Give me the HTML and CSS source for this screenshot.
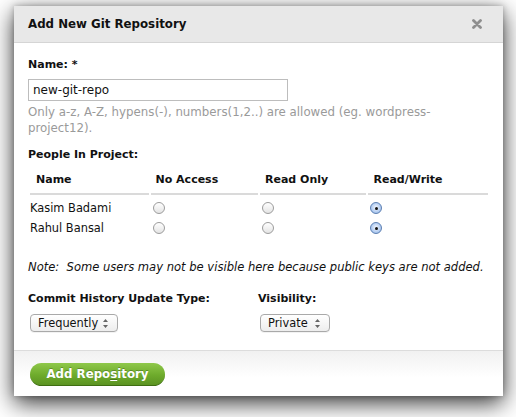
FILE: index.html
```html
<!DOCTYPE html>
<html>
<head>
<meta charset="utf-8">
<link rel="stylesheet" href="styles.css">
</head>
<body>
<div class="page">
  <div class="dialog">
    <div class="header">
      <span class="title">Add New Git Repository</span>
      <svg class="close" width="10" height="10" viewBox="0 0 10 10"><path d="M1.5 1.5 L8.5 8.5 M8.5 1.5 L1.5 8.5" stroke="#8e8e8e" stroke-width="2.8" stroke-linecap="round"/></svg>
    </div>
    <div class="content">
      <div class="label">Name: *</div>
      <div class="input">new-git-repo</div>
      <div class="help">Only a-z, A-Z, hypens(-), numbers(1,2..) are allowed (eg. wordpress-project12).</div>
      <div class="label people">People In Project:</div>
      <table class="perm">
        <colgroup><col class="c1"><col class="c2"><col class="c3"><col class="c4"></colgroup>
        <thead>
          <tr><th class="first">Name</th><th>No Access</th><th>Read Only</th><th>Read/Write</th></tr>
        </thead>
        <tbody>
          <tr><td class="first">Kasim Badami</td><td><span class="radio"></span></td><td><span class="radio"></span></td><td><span class="radio on"></span></td></tr>
          <tr><td class="first">Rahul Bansal</td><td><span class="radio"></span></td><td><span class="radio"></span></td><td><span class="radio on"></span></td></tr>
        </tbody>
      </table>
      <div class="note">Note:&nbsp; Some users may not be visible here because public keys are not added.</div>
      <div class="options">
        <div class="opt opt1">
          <div class="label">Commit History Update Type:</div>
          <div class="select w1"><span>Frequently</span><svg width="5" height="9" viewBox="0 0 5 9"><path d="M2.5 0 L5 3 L0 3 Z M2.5 9 L5 6 L0 6 Z" fill="#666"/></svg></div>
        </div>
        <div class="opt">
          <div class="label">Visibility:</div>
          <div class="select w2"><span>Private</span><svg width="5" height="9" viewBox="0 0 5 9"><path d="M2.5 0 L5 3 L0 3 Z M2.5 9 L5 6 L0 6 Z" fill="#666"/></svg></div>
        </div>
      </div>
    </div>
    <div class="footer">
      <div class="button">Add Repo<u>s</u>itory</div>
    </div>
  </div>
</div>
</body>
</html>
```
FILE: styles.css
```css
html, body {
  margin: 0;
  padding: 0;
  background: #ffffff;
}
body {
  font-family: "DejaVu Sans", "Liberation Sans", sans-serif;
  font-size: 11.5px;
  color: #111;
}
.page {
  padding: 6px 13px 21px 14px;
}
.dialog {
  width: 489px;
  background: #fff;
  box-shadow: 0 7px 22px rgba(0,0,0,0.8), 0 0 6px rgba(0,0,0,0.25);
}
.header {
  height: 36px;
  background: #e8e8e8;
  border-bottom: 1px solid #d5d5d5;
  display: flex;
  align-items: center;
  justify-content: space-between;
  padding: 0 21px 0 14px;
}
.title {
  font-weight: bold;
  font-size: 11.8px;
  color: #111;
}
.content {
  padding: 14px 14px 0 14px;
}
.label {
  font-weight: bold;
  font-size: 11px;
  line-height: 16px;
}
.input {
  margin-top: 6px;
  width: 250px;
  height: 20px;
  border: 1px solid #bdbdbd;
  padding: 0 4px;
  line-height: 20px;
  font-size: 12px;
}
.help {
  color: #9a9a9a;
  line-height: 16px;
  margin-top: 3px;
  font-size: 11.8px;
  width: 440px;
}
.people {
  margin-top: 11px;
}
.perm {
  border-collapse: separate;
  border-spacing: 2px 0;
  margin: 10px 0 0 0;
  width: 462px;
  table-layout: fixed;
}
.c1 { width: 118px; }
.c2 { width: 107px; }
.c3 { width: 106px; }
.c4 { width: 119px; }
.perm th {
  text-align: left;
  font-weight: bold;
  font-size: 11px;
  padding: 0 0 6px 5px;
  height: 13px;
  line-height: 14px;
  border-bottom: 2px solid #dadada;
}
.perm th.first {
  padding-left: 6px;
}
.perm td {
  height: 20px;
  padding: 0 0 0 2px;
  vertical-align: middle;
  font-size: 11.4px;
}
.perm tbody tr:first-child td {
  padding-top: 3px;
}
.perm td.first {
  padding-left: 0;
}
.radio {
  display: block;
  width: 10px;
  height: 10px;
  border: 1px solid #9c9c9c;
  border-radius: 50%;
  background: linear-gradient(#ffffff, #e4e4e4);
  position: relative;
}
.radio.on {
  border-color: #5c7fb2;
  background: radial-gradient(circle at 50% 45%, #f4f8ff 0, #a9c6ee 70%, #8fb3e6 100%);
}
.radio.on::after {
  content: "";
  position: absolute;
  left: 3.5px;
  top: 3.5px;
  width: 3px;
  height: 3px;
  border-radius: 50%;
  background: #111;
}
.note {
  margin-top: 21px;
  font-style: italic;
  font-size: 11.55px;
  line-height: 16px;
  white-space: nowrap;
}
.options {
  display: flex;
  margin-top: 16px;
}
.opt1 {
  width: 230px;
}
.select {
  margin: 7px 0 0 2px;
  height: 16px;
  border: 1px solid #a9a9a9;
  border-radius: 4px;
  background: linear-gradient(#ffffff, #ededed);
  display: flex;
  align-items: center;
  justify-content: space-between;
  padding: 0 9px 0 7px;
  font-size: 11.4px;
  box-shadow: 0 1px 0 rgba(0,0,0,0.05);
}
.w1 { width: 70px; }
.w2 { width: 52px; }
.footer {
  margin-top: 18px;
  border-top: 1px solid #dcdcdc;
  height: 45px;
  background: linear-gradient(#f1f1f1, #ffffff 60%);
  padding: 0 0 0 16px;
  display: flex;
  align-items: center;
}
.button {
  width: 135px;
  height: 23px;
  border-radius: 12px;
  background: linear-gradient(#8fc84a, #6eab2c 55%, #5b9322);
  border-bottom: 1px solid #3f6e12;
  box-sizing: border-box;
  color: #fff;
  font-weight: bold;
  font-size: 11.8px;
  text-align: center;
  line-height: 22px;
  text-shadow: 0 -1px 0 rgba(0,0,0,0.25);
  margin-top: 2px;
}
.button u {
  text-decoration-thickness: 1px;
  text-underline-offset: 2px;
}
```
